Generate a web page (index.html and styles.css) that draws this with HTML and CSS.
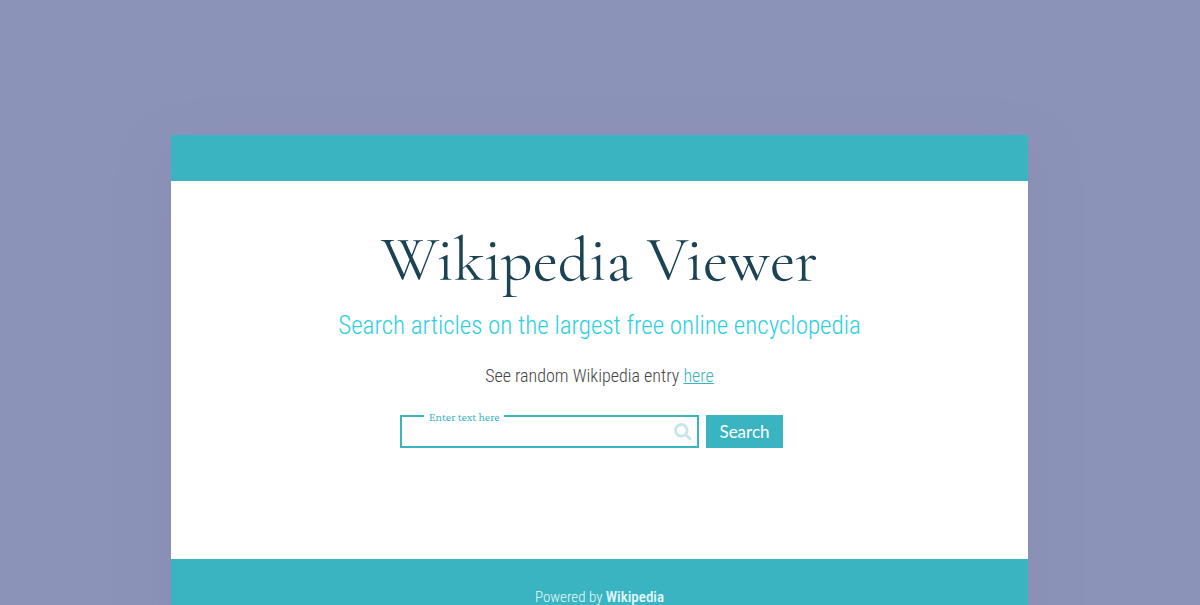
FILE: index.html
```html
<!DOCTYPE html>
<html lang="en">
<head>
  <meta charset="utf-8">
  <meta name="viewport" content="width=device-width, initial-scale=1">
  <title>Wikipedia Viewer</title>
  <link rel="stylesheet" href="styles.css">
</head>
<body>
  <div class="card">
    <header class="card-bar"></header>
    <main class="content">
      <h1 class="title">Wikipedia Viewer</h1>
      <h2 class="subtitle">Search articles on the largest free online encyclopedia</h2>
      <p class="random">See random Wikipedia entry <a class="random-link" href="#">here</a></p>
      <form class="search">
        <div class="field">
          <input class="field-input" id="query" type="text">
          <label class="field-label" for="query">Enter text here</label>
          <svg class="field-icon" viewBox="0 0 18 18" aria-hidden="true">
            <circle cx="7.3" cy="7.3" r="5.8"/>
            <path d="M11.6 11.6L16.8 16.8"/>
          </svg>
        </div>
        <button class="search-button" type="submit">Search</button>
      </form>
    </main>
    <footer class="footer">Powered by <strong class="footer-name">Wikipedia</strong></footer>
  </div>
</body>
</html>
```
FILE: styles.css
```css
* {
  box-sizing: border-box;
}

body {
  margin: 0;
  padding: 135px 16px 0 15px;
  background: #8c93b9;
  color: #444;
  font-family: "Roboto Condensed", "Liberation Sans Narrow", Roboto, sans-serif;
  font-weight: 300;
}

.card {
  max-width: 857px;
  margin: 0 auto;
  background: #fff;
  box-shadow: 0 20px 50px rgba(130, 120, 160, 0.25);
}

.card-bar {
  height: 46px;
  background: #3ab4c1;
}

.content {
  display: flex;
  flex-direction: column;
  align-items: center;
  padding: 46px 24px 111px;
  text-align: center;
}

.title {
  margin: 0;
  color: #1b4353;
  font-family: "Cormorant Garamond", "Liberation Serif", serif;
  font-size: 62px;
  font-weight: 400;
  line-height: 68px;
}

.subtitle {
  margin: 15px 0 0;
  color: #2bd0e0;
  font-size: 25px;
  font-weight: 300;
  line-height: 32px;
}

.random {
  margin: 22px 0 0;
  font-size: 18px;
  line-height: 24px;
}

.random-link {
  color: #3ab4c1;
}

.search {
  display: flex;
  gap: 7px;
  margin: 27px 16px 0 0;
}

.field {
  position: relative;
  width: 299px;
}

.field-input {
  width: 100%;
  height: 33px;
  padding: 0 36px 0 12px;
  border: 2px solid #3ab4c1;
  border-radius: 0;
  background: #fff;
  font-size: 16px;
}

.field-label {
  position: absolute;
  top: -6px;
  left: 24px;
  padding: 0 5px;
  background: #fff;
  color: #3ab4c1;
  font-family: "Crimson Pro", "Liberation Serif", serif;
  font-size: 12px;
  font-weight: 400;
  line-height: 16px;
}

.field-icon {
  position: absolute;
  top: 8px;
  right: 7px;
  width: 18px;
  height: 18px;
  fill: none;
  stroke: #c3e6ea;
  stroke-width: 2.8;
}

.search-button {
  width: 77px;
  height: 33px;
  padding: 0;
  border: 0;
  background: #3ab4c1;
  color: #fff;
  font-family: Lato, sans-serif;
  font-size: 17px;
}

.footer {
  padding: 28px 16px;
  background: #3ab4c1;
  color: #e6fafc;
  font-size: 15px;
  line-height: 20px;
  text-align: center;
}

.footer-name {
  font-weight: 500;
}
```
